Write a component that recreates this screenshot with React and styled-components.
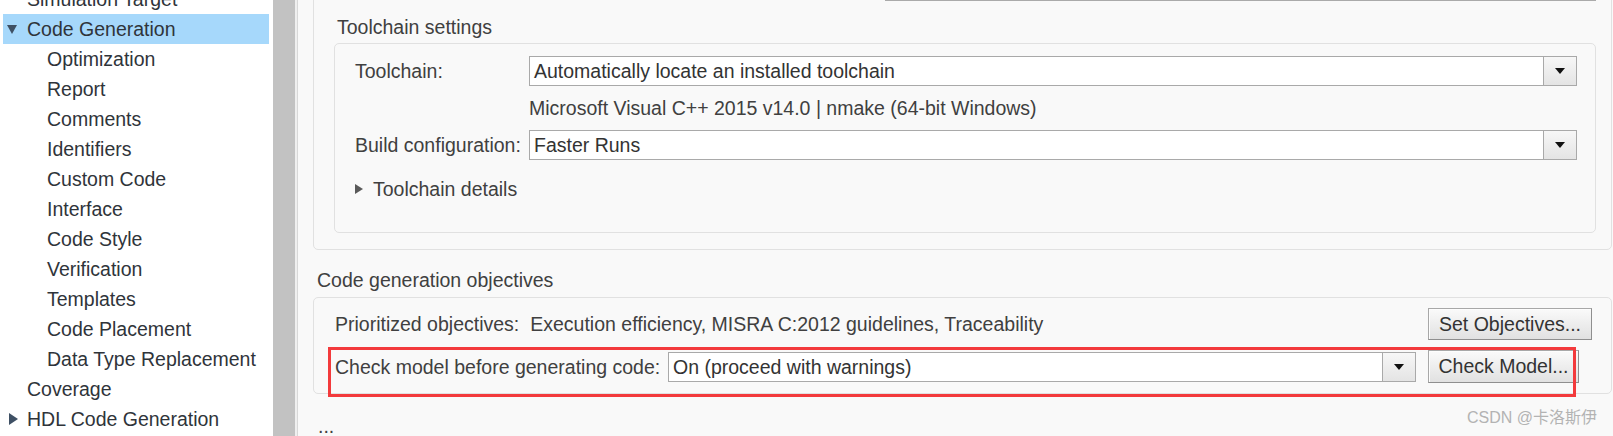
import React from "react";
import styled, { createGlobalStyle } from "styled-components";

// 전역 스타일
const GlobalStyle = createGlobalStyle`
  html, body {
    margin: 0;
    padding: 0;
    background: #f9f9f9;
  }
  * {
    box-sizing: border-box;
  }
`;

const Root = styled.div`
  position: relative;
  display: flex;
  width: 1613px;
  height: 436px;
  overflow: hidden;
  background: #f9f9f9;
  font-family: "Liberation Sans", Arial, sans-serif;
  font-size: 19.5px;
`;

// 왼쪽 트리
const Sidebar = styled.div`
  width: 273px;
  flex: none;
  background: #fff;
  overflow: hidden;
`;

const TreeList = styled.div`
  margin-top: -16px;
  padding: 0 4px 0 3px;
`;

const TreeRow = styled.div`
  display: flex;
  align-items: center;
  height: 30px;
  padding-left: ${(p) => 5 + p.$level * 20}px;
  background: ${(p) => (p.$selected ? "#a6d8fb" : "transparent")};
  color: #2f343a;
  white-space: nowrap;
`;

const Toggle = styled.span`
  width: 19px;
  flex: none;
  display: flex;
  align-items: center;
`;

const Caret = styled.span`
  width: 0;
  height: 0;
  ${(p) =>
    p.$open
      ? `border-left: 5px solid transparent;
         border-right: 5px solid transparent;
         border-top: 9px solid #3e5064;
         margin-left: -1px;`
      : `border-top: 6px solid transparent;
         border-bottom: 6px solid transparent;
         border-left: 9px solid #3e5064;
         margin-left: 1px;`}
`;

const ScrollTrack = styled.div`
  width: 22px;
  flex: none;
  background: #c2c2c2;
`;

const Divider = styled.div`
  width: 3px;
  flex: none;
  background: #efefef;
  border-right: 1px solid #d8d8d8;
`;

// 오른쪽 설정 영역
const Main = styled.div`
  flex: 1;
  display: flex;
  flex-direction: column;
  padding: 0 1px 0 15px;
  color: #404040;
  line-height: 22px;
`;

const Section = styled.div`
  position: relative;
  border: 1px solid #e1e1e1;
  border-radius: 5px;
  background: #f9f9f9;
`;

const TopSection = styled(Section)`
  margin-top: -40px;
  padding: 8px 15px 16px 20px;
`;

const PrevField = styled.div`
  height: 32px;
  margin-left: 551px;
  border: 1px solid #aaa;
  background: #fff;
`;

const SubHeading = styled.div`
  margin: 15px 0 5px 3px;
`;

const InnerBox = styled.div`
  border: 1px solid #e1e1e1;
  border-radius: 5px;
  padding: 12px 18px 32px 20px;
`;

const FieldRow = styled.div`
  display: flex;
  align-items: center;
  height: 30px;
  margin-top: ${(p) => p.$gap || 0}px;
`;

const FieldLabel = styled.span`
  width: ${(p) => p.$width || 174}px;
  flex: none;
  white-space: nowrap;
`;

const Info = styled.div`
  margin: 11px 0 -1px 174px;
  height: 22px;
`;

const Select = styled.div`
  flex: 1;
  display: flex;
  height: 30px;
  border: 1px solid #a9a9a9;
  background: #fff;
`;

const SelectValue = styled.div`
  flex: 1;
  padding-left: 4px;
  line-height: 28px;
  color: #333;
  white-space: nowrap;
  overflow: hidden;
`;

const SelectButton = styled.div`
  width: 33px;
  flex: none;
  display: flex;
  align-items: center;
  justify-content: center;
  border-left: 1px solid #a9a9a9;
  background: linear-gradient(#f7f7f7, #e4e4e4);
`;

const DownArrow = styled.span`
  width: 0;
  height: 0;
  border-left: 5px solid transparent;
  border-right: 5px solid transparent;
  border-top: 6px solid #111;
`;

const Details = styled.div`
  display: flex;
  align-items: center;
  margin-top: 18px;
`;

const DetailsCaret = styled.span`
  width: 0;
  height: 0;
  margin-right: 10px;
  border-top: 5px solid transparent;
  border-bottom: 5px solid transparent;
  border-left: 8px solid #5a5a5a;
`;

const SectionTitle = styled.div`
  margin: 19px 0 6px 4px;
`;

const ObjectivesBox = styled(Section)`
  display: flex;
  flex-direction: column;
  gap: 10px;
  padding: 10px 19px 10px 21px;
`;

const ObjRow = styled.div`
  display: flex;
  align-items: center;
  height: ${(p) => p.$height}px;
`;

const ObjValue = styled.span`
  margin-left: 11px;
  white-space: nowrap;
`;

const Button = styled.button`
  width: ${(p) => p.$width}px;
  height: 100%;
  margin-left: ${(p) => (p.$ml === undefined ? "auto" : `${p.$ml}px`)};
  margin-right: ${(p) => p.$mr || 0}px;
  padding: 0;
  border: 1px solid #a8a8a8;
  border-right-color: #8f8f8f;
  border-bottom-color: #8f8f8f;
  box-shadow: inset 1px 1px 0 #fdfdfd;
  background: linear-gradient(#fafafa, #e1e1e1);
  font-family: inherit;
  font-size: 19.5px;
  color: #333;
  white-space: nowrap;
`;

const Highlight = styled.div`
  position: absolute;
  left: 14px;
  top: 49px;
  width: 1248px;
  height: 50px;
  border: 3px solid #f33a3c;
  pointer-events: none;
`;

const Ellipsis = styled.div`
  margin: 21px 0 0 5px;
`;

const Watermark = styled.div`
  position: absolute;
  right: 16px;
  bottom: 8px;
  font-family: "Liberation Sans", "Noto Sans CJK SC", sans-serif;
  font-size: 16px;
  color: #b3b3b3;
`;

const treeItems = [
  { label: "Simulation Target", level: 0 },
  { label: "Code Generation", level: 0, open: true, selected: true },
  { label: "Optimization", level: 1 },
  { label: "Report", level: 1 },
  { label: "Comments", level: 1 },
  { label: "Identifiers", level: 1 },
  { label: "Custom Code", level: 1 },
  { label: "Interface", level: 1 },
  { label: "Code Style", level: 1 },
  { label: "Verification", level: 1 },
  { label: "Templates", level: 1 },
  { label: "Code Placement", level: 1 },
  { label: "Data Type Replacement", level: 1 },
  { label: "Coverage", level: 0 },
  { label: "HDL Code Generation", level: 0, open: false },
];

const Dropdown = ({ value }) => (
  <Select>
    <SelectValue>{value}</SelectValue>
    <SelectButton>
      <DownArrow />
    </SelectButton>
  </Select>
);

const App = () => {
  return (
    <>
      <GlobalStyle />
      <Root>
        {/* 트리 */}
        <Sidebar>
          <TreeList>
            {treeItems.map((item) => (
              <TreeRow
                key={item.label}
                $level={item.level}
                $selected={item.selected}
              >
                <Toggle>
                  {item.open !== undefined && <Caret $open={item.open} />}
                </Toggle>
                {item.label}
              </TreeRow>
            ))}
          </TreeList>
        </Sidebar>
        <ScrollTrack />
        <Divider />

        {/* 설정 패널 */}
        <Main>
          <TopSection>
            <PrevField />
            <SubHeading>Toolchain settings</SubHeading>
            <InnerBox>
              <FieldRow>
                <FieldLabel>Toolchain:</FieldLabel>
                <Dropdown value="Automatically locate an installed toolchain" />
              </FieldRow>
              <Info>Microsoft Visual C++ 2015 v14.0 | nmake (64-bit Windows)</Info>
              <FieldRow $gap={12}>
                <FieldLabel>Build configuration:</FieldLabel>
                <Dropdown value="Faster Runs" />
              </FieldRow>
              <Details>
                <DetailsCaret />
                Toolchain details
              </Details>
            </InnerBox>
          </TopSection>

          <SectionTitle>Code generation objectives</SectionTitle>
          <ObjectivesBox>
            <ObjRow $height={32}>
              <span>Prioritized objectives:</span>
              <ObjValue>
                Execution efficiency, MISRA C:2012 guidelines, Traceability
              </ObjValue>
              <Button $width={164}>Set Objectives...</Button>
            </ObjRow>
            <ObjRow $height={33}>
              <FieldLabel $width={333}>Check model before generating code:</FieldLabel>
              <Dropdown value="On (proceed with warnings)" />
              <Button $width={151} $ml={12} $mr={13}>
                Check Model...
              </Button>
            </ObjRow>
            <Highlight />
          </ObjectivesBox>

          <Ellipsis>...</Ellipsis>
        </Main>

        <Watermark>CSDN @卡洛斯伊</Watermark>
      </Root>
    </>
  );
};

export default App;
